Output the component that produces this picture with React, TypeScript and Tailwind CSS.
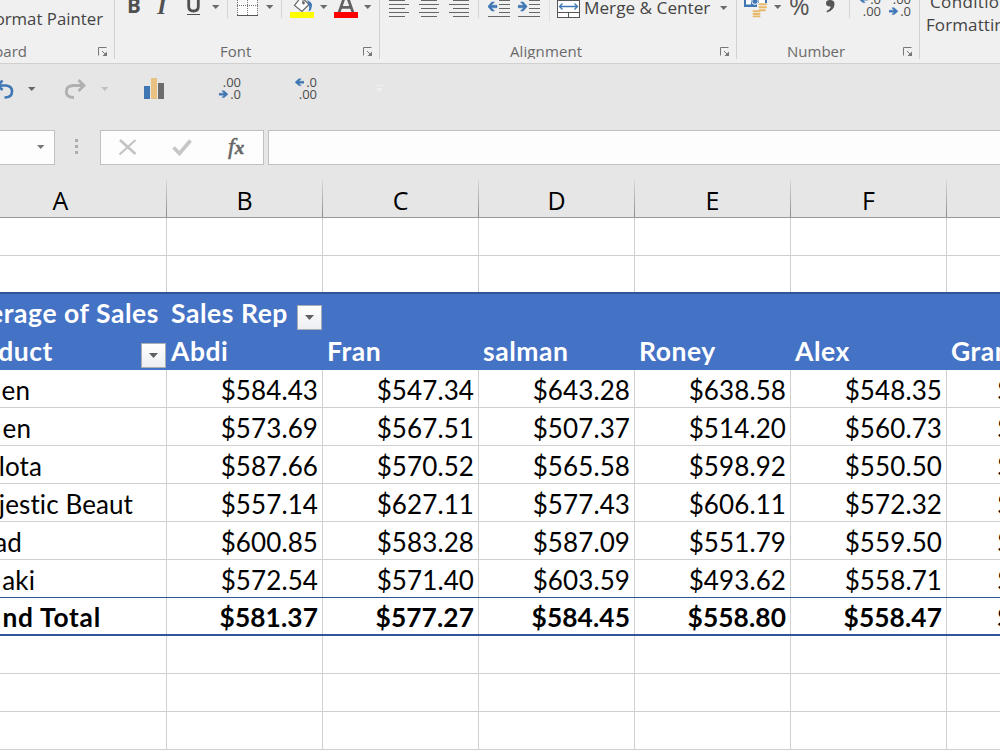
import React from "react";

type IconProps = { x: number; y?: number; w: number; h: number; className?: string; children: React.ReactNode };

function Icon({ x, y = 0, w, h, className = "", children }: IconProps) {
  return (
    <svg className={`block shrink-0 ${className}`} width={w} height={h} viewBox={`${x} ${y} ${w} ${h}`} fill="none">
      {children}
    </svg>
  );
}

function Caret({ className = "", color = "#6a6a6a" }: { className?: string; color?: string }) {
  return (
    <svg className={`block shrink-0 ${className}`} width="8" height="4" viewBox="0 0 8 4">
      <path d="M0 0H7.4L3.7 4Z" fill={color} />
    </svg>
  );
}

function Sep({ className = "" }: { className?: string }) {
  return <div className={`h-[18px] w-px shrink-0 bg-[#d4d4d4] ${className}`} />;
}

function Launcher({ className = "" }: { className?: string }) {
  return (
    <svg className={`block shrink-0 ${className}`} width="10" height="10" viewBox="0 0 10 10" fill="none">
      <path d="M.5 8.5V.5H8.5M4 4L7.5 7.5" stroke="#777" />
      <path d="M9 4.5V9H4.5Z" fill="#777" />
    </svg>
  );
}

function AlignIcon({ x, kind, className }: { x: number; kind: "left" | "center" | "right"; className: string }) {
  const off = kind === "left" ? 0 : kind === "center" ? 2 : 4;
  return (
    <Icon x={x} w={20} h={18} className={className}>
      {[0, 4, 8, 12, 16].map((y, i) => (
        <rect key={y} x={i % 2 ? x : x + off} y={y} width={i % 2 ? 20 : 16} height="1" fill="#666" />
      ))}
    </Icon>
  );
}

const arrowRight = "M0 3.2H5L2.8 .8H5.2L9 4.2L5.2 7.6H2.8L5 5.2H0Z";
const arrowLeft = "M9 3.2H4L6.2 .8H3.8L0 4.2L3.8 7.6H6.2L4 5.2H9Z";

function Decimals({ dir, className = "" }: { dir: "more" | "less"; className?: string }) {
  const more = dir === "more";
  const arrow = (
    <svg className={`block ${more ? "mr-[2px]" : "mr-[2px]"}`} width="9" height="9" viewBox="0 0 9 9">
      <path d={more ? arrowLeft : arrowRight} fill="#3f77b5" stroke="#3f77b5" strokeWidth=".4" />
    </svg>
  );
  return (
    <div className={`flex w-[24px] shrink-0 flex-col items-end font-['Open_Sans',sans-serif] text-[13px] leading-[12px] text-[#4c4c4c] ${className}`}>
      <div className="flex h-[12px] items-center">{more && arrow}{more ? ".0" : ".00"}</div>
      <div className="flex h-[12px] items-center">{!more && arrow}{more ? ".00" : ".0"}</div>
    </div>
  );
}

const label = "text-[15px] leading-[20px] text-[#6a6a6a]";

function Ribbon() {
  return (
    <div className="flex h-[64px] overflow-hidden border-b border-[#d0d0d0] bg-[#f0f0f0] text-[#444]">
      <div className="h-[59px] w-[115px] shrink-0 overflow-hidden border-r border-[#d2d2d2]">
        <div className="flex h-[41px] justify-end pr-[11px]">
          <span className="shrink-0 whitespace-nowrap text-[16.8px] leading-[37px]">Format Painter</span>
        </div>
        <div className="flex justify-end pr-[6px]">
          <span className={`shrink-0 ${label}`}>Clipboard</span>
          <Launcher className="ml-[71px] mt-[6px]" />
        </div>
      </div>

      <div className="h-[59px] w-[265px] shrink-0 overflow-hidden border-r border-[#d2d2d2]">
        <div className="flex h-[41px]">
          <span className="ml-[12px] w-[14px] shrink-0 text-[20.5px] font-bold leading-[11px] text-[#505050]">B</span>
          <span className="ml-[16px] w-[13px] shrink-0 font-['Liberation_Serif',serif] text-[24px] font-bold italic leading-[12px] text-[#505050]">I</span>
          <Icon x={186} w={15} h={18} className="ml-[16px]">
            <path d="M188.7 0V6.5Q188.7 11 193.5 11T198.3 6.5V0" stroke="#505050" strokeWidth="2.8" />
            <rect x="187" y="14" width="13" height="1" fill="#505050" />
          </Icon>
          <Caret className="ml-[11px] mt-[5px]" />
          <Sep className="ml-[7px]" />
          <Icon x={237} w={21} h={18} className="ml-[9px]">
            <path d="M238 0H257V15H238Z" fill="#fcfcfc" />
            <path d="M237.5 0V15M247.5 0V15M257.5 0V15M237 5.5H258" stroke="#777" strokeDasharray="1 1" />
            <rect x="237" y="15" width="21" height="1" fill="#555" />
          </Icon>
          <Caret className="ml-[8px] mt-[5px]" />
          <Sep className="ml-[7px]" />
          <Icon x={290} w={24} h={18} className="ml-[8px]">
            <path d="M299.5 -1L294.5 5.5L302 11.5L309 4.5L303.5 -1Z" fill="#fafafa" stroke="#666" strokeWidth="1.2" />
            <circle cx="303.5" cy="3" r="1.4" fill="#666" />
            <path d="M303 -1V3" stroke="#666" />
            <path d="M307 0Q314 2 311 10L308.5 11.5Q310.5 6 307 0Z" fill="#3f77b5" />
            <rect x="290" y="12" width="24" height="6" fill="#ff0" />
          </Icon>
          <Caret className="ml-[6px] mt-[5px]" />
          <Icon x={334} w={24} h={18} className="ml-[6px]">
            <path d="M339 12.5L344.5 -3M353 12.5L347.5 -3M341 7.3H351" stroke="#606060" strokeWidth="2.7" />
            <rect x="334" y="12" width="24" height="6" fill="#f00" />
          </Icon>
          <Caret className="ml-[6px] mt-[5px]" />
        </div>
        <div className="flex">
          <span className={`ml-[105px] w-[143px] shrink-0 ${label}`}>Font</span>
          <Launcher className="mt-[6px]" />
        </div>
      </div>

      <div className="h-[59px] w-[357px] shrink-0 overflow-hidden border-r border-[#d2d2d2]">
        <div className="flex h-[41px]">
          <AlignIcon x={389} kind="left" className="ml-[9px]" />
          <AlignIcon x={419} kind="center" className="ml-[10px]" />
          <AlignIcon x={449} kind="right" className="ml-[10px]" />
          <Sep className="ml-[9px]" />
          <Icon x={488} w={22} h={18} className="ml-[9px]">
            <path d="M497 5.2H491.4L494.5 2H491.7L487.8 6.5L491.7 11H494.5L491.4 7.8H497Z" fill="#3f77b5" stroke="#3f77b5" strokeWidth=".5" />
            <path d="M499 .5H510M499 4.5H510M499 8.5H510M499 12.5H510M488 16.5H510" stroke="#666" />
          </Icon>
          <Icon x={518} w={22} h={18} className="ml-[8px]">
            <path d="M518 5.2H523.6L520.5 2H523.3L527.2 6.5L523.3 11H520.5L523.6 7.8H518Z" fill="#3f77b5" stroke="#3f77b5" strokeWidth=".5" />
            <path d="M529 .5H540M529 4.5H540M529 8.5H540M529 12.5H540M518 16.5H540" stroke="#666" />
          </Icon>
          <div className="ml-[9px] h-[22px] w-px shrink-0 bg-[#e0e0e0]" />
          <Icon x={557} w={23} h={18} className="ml-[7px]">
            <rect x="557.5" y="-2.5" width="22" height="20" fill="#fff" stroke="#555" />
            <path d="M557 .5H580M557 12.5H580M568.5 12V18" stroke="#555" />
            <path d="M560 6.5H577M562.5 3.5L559.5 6.5L562.5 9.5M574.5 3.5L577.5 6.5L574.5 9.5" stroke="#3f77b5" strokeWidth="1.3" />
          </Icon>
          <span className="ml-[4px] w-[136px] shrink-0 whitespace-nowrap text-[17.2px] leading-[15px]">Merge &amp; Center</span>
          <Caret className="mt-[6px]" />
        </div>
        <div className="flex">
          <span className={`ml-[130px] w-[210px] shrink-0 tracking-[0.1px] ${label}`}>Alignment</span>
          <Launcher className="mt-[6px]" />
        </div>
      </div>

      <div className="h-[59px] w-[183px] shrink-0 overflow-hidden border-r border-[#d2d2d2]">
        <div className="flex h-[41px]">
          <Icon x={744} w={24} h={18} className="ml-[7px]">
            <path d="M744 0H767V4H757V7H744Z" fill="#3f77b5" />
            <path d="M746 0H751V4.5H746ZM759 0H765V3H759Z" fill="#fff" />
            <circle cx="755" cy="1.2" r="3.2" fill="#3f77b5" stroke="#fff" />
            <rect x="758" y="3" width="10" height="9" fill="#f0f0f0" />
            <path d="M759.5 4.2H766M759.5 7.2H766M759.5 10.2H765M753.5 11.2H759.5M753.5 14H759.5M753.5 16.4H759.5" stroke="#e8b96a" strokeWidth="1.9" strokeLinecap="round" />
          </Icon>
          <Caret className="ml-[6px] mt-[5px]" />
          <span className="ml-[7px] w-[22px] shrink-0 text-[25px] leading-[11px] text-[#555]">%</span>
          <Icon x={825} w={11} h={18} className="ml-[14px]">
            <path d="M826 3.2Q826 0 830 0Q834.5 0 834.5 4Q834.5 10 827 12.5L826.5 11Q830.5 9 830.7 6.5Q826 6.7 826 3.2Z" fill="#555" />
          </Icon>
          <Sep className="ml-[13px]" />
          <Decimals dir="more" className="ml-[7px] -mt-[7px]" />
          <Decimals dir="less" className="ml-[6px] -mt-[7px]" />
        </div>
        <div className="flex">
          <span className={`ml-[50px] w-[116px] shrink-0 ${label}`}>Number</span>
          <Launcher className="mt-[6px]" />
        </div>
      </div>

      <div className="-mt-[10px] ml-[6px] flex shrink-0 flex-col text-[17px]">
        <span className="ml-[4px] leading-[24px] tracking-[0.35px]">Conditional</span>
        <span className="leading-[22px] tracking-[0.1px]">Formatting</span>
      </div>
    </div>
  );
}

function QuickAccess() {
  return (
    <div className="flex h-[66px] bg-[#e6e6e6]">
      <Icon x={0} y={78} w={14} h={22} className="mt-[14px]">
        <path d="M-2 85.5H6Q12 86 12 91.5Q12 97.5 4.5 97.5" stroke="#3f77b5" strokeWidth="2.6" />
        <path d="M2.5 80.5L-2 85.5L2.5 90" stroke="#3f77b5" strokeWidth="2.6" />
      </Icon>
      <Caret className="ml-[14px] mt-[23px]" color="#666" />
      <Icon x={64} y={78} w={23} h={22} className="ml-[28px] mt-[14px]">
        <path d="M84 85.5H73Q66.3 86 66.3 91.5Q66.3 97.5 74 97.5" stroke="#b0b0b0" strokeWidth="2.8" />
        <path d="M78.5 80L84 85.5L78.5 91" stroke="#b0b0b0" strokeWidth="2.8" />
      </Icon>
      <Caret className="ml-[14px] mt-[23px]" color="#c0c0c0" />
      <Icon x={144} y={78} w={20} h={22} className="ml-[35px] mt-[14px]">
        <rect x="144" y="86" width="6" height="13" fill="#3f77b5" />
        <rect x="151" y="78" width="6" height="21" fill="#e9c283" />
        <rect x="158" y="83" width="6" height="16" fill="#6c6c6c" />
      </Icon>
      <Decimals dir="less" className="ml-[53px] mt-[12px]" />
      <Decimals dir="more" className="ml-[52px] mt-[12px]" />
      <Icon x={376} y={84} w={8} h={9} className="ml-[59px] mt-[20px]">
        <path d="M376 85H383V86H376ZM376 88H383L379.5 92Z" fill="#f0f0f0" />
      </Icon>
    </div>
  );
}

function FormulaBar() {
  return (
    <div className="flex h-[35px] bg-[#e6e6e6]">
      <div className="flex w-[55px] justify-end border border-l-0 border-[#c0c0c0] bg-[#fdfdfd] pr-[9px]">
        <Caret className="mt-[14px]" color="#777" />
      </div>
      <div className="ml-[20px] mt-[9px] flex w-[25px] flex-col gap-[3px]">
        <div className="size-[3px] bg-[#acacac]" />
        <div className="size-[3px] bg-[#acacac]" />
        <div className="size-[3px] bg-[#acacac]" />
      </div>
      <div className="flex w-[164px] border border-[#c0c0c0] bg-[#fdfdfd]">
        <Icon x={118} y={138} w={19} h={18} className="ml-[17px] mt-[7px]">
          <path d="M120 140L135.5 154" stroke="#c4c4c4" strokeWidth="2.7" />
          <path d="M135.5 140L119.5 154.5" stroke="#c4c4c4" strokeWidth="2.2" />
        </Icon>
        <Icon x={172} y={138} w={20} h={18} className="ml-[35px] mt-[7px]">
          <path d="M173.5 147.5L179.5 153.5L190.5 140.5" stroke="#c6c6c6" strokeWidth="3.6" />
        </Icon>
        <span className="ml-[36px] shrink-0 whitespace-nowrap font-['Liberation_Serif',serif] text-[24px] italic leading-[31px] text-[#666] [-webkit-text-stroke:0.5px_#666]">
          f<span className="text-[19px] font-bold">x</span>
        </span>
      </div>
      <div className="ml-[4px] flex-1 border border-r-0 border-[#c0c0c0] bg-[#fdfdfd]" />
    </div>
  );
}

function ColumnHeads() {
  return (
    <div className="flex h-[53px] border-b border-[#999] bg-[#e6e6e6] pt-[15px] text-[25px] leading-[40px] text-black">
      <div className="flex w-[167px] shrink-0">
        <span className="w-[166px] pr-[45px] text-center">A</span>
        <div className="h-[37px] w-px bg-linear-to-b from-[#d8d8d8] to-[#8c8c8c]" />
      </div>
      {["B", "C", "D", "E", "F"].map((c) => (
        <div key={c} className="flex w-[156px] shrink-0">
          <span className="w-[155px] text-center">{c}</span>
          <div className="h-[37px] w-px bg-linear-to-b from-[#d8d8d8] to-[#8c8c8c]" />
        </div>
      ))}
    </div>
  );
}

function FilterButton({ className = "" }: { className?: string }) {
  return (
    <div className={`flex size-[25px] shrink-0 items-center justify-center border border-[#a9adb5] bg-linear-to-b from-white to-[#eceef2] ${className}`}>
      <svg width="9" height="5" viewBox="0 0 9 5"><path d="M0 0H9L4.5 5Z" fill="#606060" /></svg>
    </div>
  );
}

const rows: { name: string; pad: string; values: string[] }[] = [
  { name: "en", pad: "pr-[136px]", values: ["$584.43", "$547.34", "$643.28", "$638.58", "$548.35"] },
  { name: "en", pad: "pr-[135px]", values: ["$573.69", "$567.51", "$507.37", "$514.20", "$560.73"] },
  { name: "lota", pad: "pr-[124px]", values: ["$587.66", "$570.52", "$565.58", "$598.92", "$550.50"] },
  { name: "Majestic Beaut", pad: "pr-[33px]", values: ["$557.14", "$627.11", "$577.43", "$606.11", "$572.32"] },
  { name: "ad", pad: "pr-[144px]", values: ["$600.85", "$583.28", "$587.09", "$551.79", "$559.50"] },
  { name: "aki", pad: "pr-[131px]", values: ["$572.54", "$571.40", "$603.59", "$493.62", "$558.71"] },
];

const totals = ["$581.37", "$577.27", "$584.45", "$558.80", "$558.47"];

function EmptyRow({ line = "border-b border-[#d0d0d0]" }: { line?: string }) {
  return (
    <div className={`flex h-[38px] ${line}`}>
      <div className="w-[167px] shrink-0 border-r border-[#d0d0d0]" />
      {[0, 1, 2, 3, 4].map((i) => (
        <div key={i} className="w-[156px] shrink-0 border-r border-[#d0d0d0]" />
      ))}
    </div>
  );
}

function DataRow({ name, pad, values, line, bold = "leading-[40px]", nameStyle = "" }: { name: string; pad: string; values: string[]; line: string; bold?: string; nameStyle?: string }) {
  return (
    <div className={`flex h-[38px] overflow-hidden ${line} ${bold}`}>
      <div className={`flex w-[167px] shrink-0 justify-end overflow-hidden whitespace-nowrap border-r border-[#d0d0d0] ${pad}`}>
        <span className={`shrink-0 ${nameStyle}`}>{name}</span>
      </div>
      {values.map((v, i) => (
        <div key={i} className="w-[156px] shrink-0 border-r border-[#d0d0d0] pr-[4px] text-right">{v}</div>
      ))}
      <span className="ml-[50px] shrink-0">$</span>
    </div>
  );
}

function Sheet() {
  return (
    <div className="bg-white font-['Lato',sans-serif] text-[26px] tracking-[0.1px] text-black [font-variant-ligatures:none]">
      <EmptyRow />
      <EmptyRow line="border-b-2 border-[#2f5597]" />
      <div className="bg-[#4472c4] text-[26.5px] font-bold leading-[39px] tracking-[0.55px] text-white">
        <div className="flex h-[38px]">
          <div className="flex w-[167px] shrink-0 justify-end overflow-hidden whitespace-nowrap pr-[8px]">
            <span className="shrink-0">Average of Sales</span>
          </div>
          <div className="flex w-[156px] shrink-0 justify-between pl-[4px] pr-px">
            <span className="whitespace-nowrap">Sales Rep</span>
            <FilterButton className="mt-[11px]" />
          </div>
        </div>
        <div className="flex h-[38px] overflow-hidden">
          <div className="flex w-[167px] shrink-0 pr-px">
            <div className="flex w-[53px] justify-end"><span className="shrink-0">Product</span></div>
            <FilterButton className="ml-auto mt-[11px]" />
          </div>
          {["Abdi", "Fran", "salman", "Roney", "Alex", "Grand Total"].map((n) => (
            <div key={n} className="w-[156px] shrink-0 whitespace-nowrap pl-[4px]">{n}</div>
          ))}
        </div>
      </div>
      {rows.map((r, i) => (
        <DataRow key={i} {...r} line={i === 5 ? "border-b border-b-[#2f5597]" : "border-b border-b-[#d0d0d0]"} />
      ))}
      <DataRow
        name="nd Total"
        pad="pr-[65px]"
        values={totals}
        line="border-b-2 border-b-[#2f5597]"
        bold="text-[26.3px] font-bold leading-[39px]"
        nameStyle="tracking-[0.75px]"
      />
      <EmptyRow />
      <EmptyRow />
      <EmptyRow />
    </div>
  );
}

export default function App() {
  return (
    <div className="h-[750px] w-[1000px] overflow-hidden bg-white font-['Open_Sans',sans-serif]">
      <Ribbon />
      <QuickAccess />
      <FormulaBar />
      <ColumnHeads />
      <Sheet />
    </div>
  );
}
